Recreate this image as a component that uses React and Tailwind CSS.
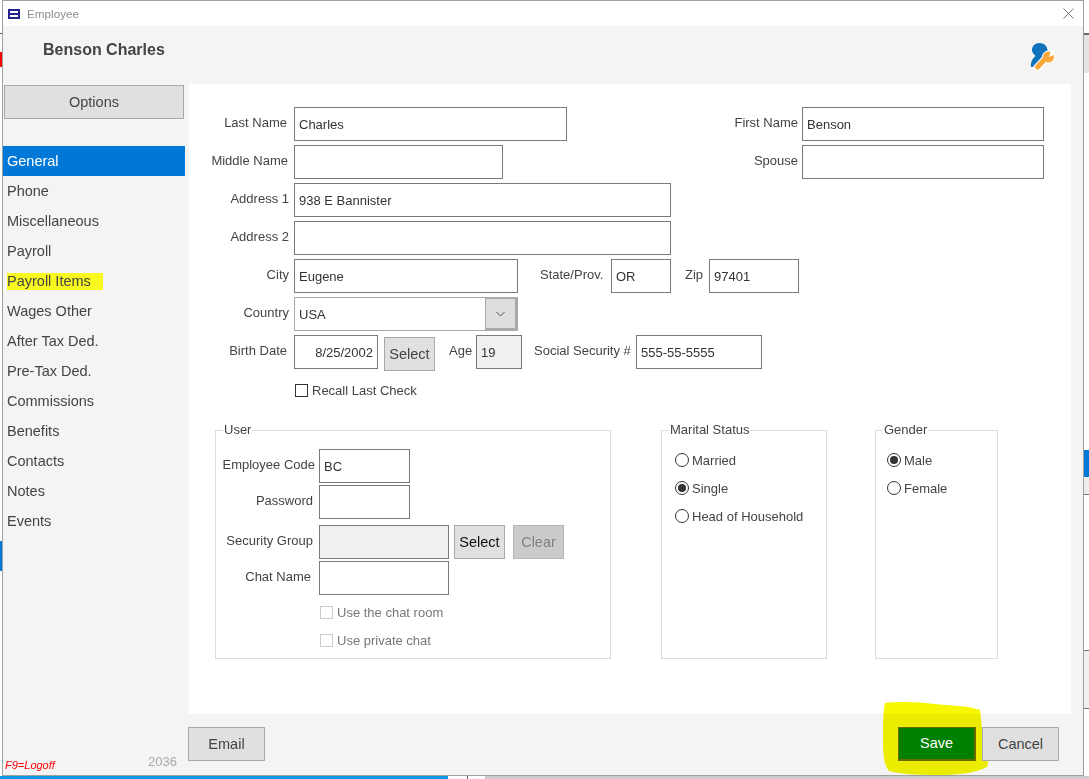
const navItems = ["General","Phone","Miscellaneous","Payroll","Payroll Items","Wages Other","After Tax Ded.","Pre-Tax Ded.","Commissions","Benefits","Contacts","Notes","Events"];

function Label({ className = "", children }) {
  return <label className={"shrink-0 pt-[7px] text-[13px] leading-[18px] text-[#444] whitespace-nowrap " + className}>{children}</label>;
}

function Field({ value = "", bg = "bg-white", className = "" }) {
  return <input readOnly value={value} className={"h-[34px] shrink-0 border border-[#7a7a7a] px-[4px] text-[13px] text-[#333] outline-none " + bg + " " + className} />;
}

function Btn({ look = "border border-[#a9a9a9] bg-[#e0e0e0] text-[#444]", className = "", children }) {
  return <button className={"flex h-[34px] shrink-0 items-center justify-center pt-[1px] text-[14.5px] " + look + " " + className}>{children}</button>;
}

function Radio({ checked, label }) {
  return (
    <div className="flex h-[28px] items-center gap-[3px] text-[13px] text-[#444]">
      <span className="flex h-[14px] w-[14px] items-center justify-center rounded-full border border-[#333] bg-white">
        {checked && <span className="h-[8px] w-[8px] rounded-full bg-[#333]" />}
      </span>
      <span className="pt-[1px]">{label}</span>
    </div>
  );
}

function Check({ label, disabled, className = "" }) {
  return (
    <div className={"flex items-center gap-[4px] text-[13px] " + (disabled ? "text-[#777] " : "text-[#444] ") + className}>
      <span className={"h-[13px] w-[13px] border bg-white " + (disabled ? "border-[#ccc]" : "border-[#333]")} />
      <span className="pt-[1px]">{label}</span>
    </div>
  );
}

function UserIcon() {
  return (
    <svg width="26" height="28" viewBox="0 0 26 28" className="block">
      <path d="M10.500 1c4.500 0 8 3 8 7.500 0 3.500-2 6-4 7.500l-2 8-10.500 1c-.5-3 .3-6 2-8.500 1-1.300 2-2 2.500-2.500C4.500 12 3 10.500 3 8 3 4 6 1 10.500 1z" fill="#1273bd" />
      <path d="M8.500 25.500l9-9.500" stroke="#fff" strokeWidth="8" strokeLinecap="round" />
      <circle cx="19.500" cy="15" r="6.500" fill="#fff" />
      <path d="M8.500 25l8.500-9" stroke="#f9a63a" strokeWidth="5" strokeLinecap="round" />
      <circle cx="19.500" cy="15" r="5.500" fill="#f9a63a" />
      <path d="M19.800 15L22.300 8.500H26V12.500z" fill="#fff" />
    </svg>
  );
}

export default function App() {
  return (
    <div className="relative h-[779px] w-[1089px] overflow-hidden bg-white font-['Liberation_Sans',Arial,sans-serif]">
      {/* application behind the dialog */}
      <div className="absolute left-0 top-[52px] h-[15px] w-[3px] bg-[#f00]" />
      <div className="absolute left-0 top-[541px] h-[30px] w-[3px] bg-[#0078d7]" />
      <div className="absolute left-0 top-[33px] h-[1px] w-[3px] bg-[#555]" />
      <div className="absolute bottom-0 left-0 h-[3px] w-[448px] bg-[#0a96e0]" />
      <div className="absolute bottom-0 left-[467px] h-[3px] w-[1px] bg-[#666]" />
      <div className="absolute bottom-0 left-[485px] h-[3px] w-[604px] bg-[#ccc]" />
      <div className="absolute right-0 top-[33px] h-[40px] w-[5px] border-t-2 border-[#666] bg-[#e4e4e4]" />
      <div className="absolute right-0 top-[450px] h-[27px] w-[5px] bg-[#0078d7]" />
      <div className="absolute right-0 top-[478px] h-[17px] w-[5px] border-b border-[#777] bg-[#eee]" />
      <div className="absolute right-0 top-[650px] h-[59px] w-[5px] border-y border-[#777] bg-[#f0f0f0]" />

      {/* dialog */}
      <div className="relative ml-[2px] flex h-[776px] w-[1082px] flex-col border-x border-y border-[#a0a0a0] bg-[#f4f4f4]">
        <div className="flex h-[25px] shrink-0 items-center bg-white pl-[5px] pr-[9px]">
          <svg width="12" height="10" viewBox="0 0 12 10" className="mr-[7px]">
            <rect width="12" height="10" fill="#23238e" />
            <rect x="2" y="2" width="8" height="2" fill="#fff" />
            <rect x="2" y="6" width="8" height="2" fill="#fff" />
          </svg>
          <span className="text-[11.7px] text-[#8c8c8c]">Employee</span>
          <svg width="11" height="11" viewBox="0 0 11 11" className="ml-auto">
            <path d="M.5.500l10 10M10.500.500l-10 10" stroke="#777" strokeWidth="1" />
          </svg>
        </div>

        <div className="flex h-[58px] shrink-0 items-start justify-between pl-[40px] pr-[28px]">
          <h1 className="pt-[14px] text-[16px] font-bold leading-[19px] text-[#444]">Benson Charles</h1>
          <div className="pt-[16px]"><UserIcon /></div>
        </div>

        <div className="flex min-h-0 flex-1">
          <aside className="flex w-[186px] shrink-0 flex-col">
            <Btn className="ml-[1px] mt-[1px] w-[180px]">Options</Btn>
            <nav className="mt-[27px] w-[182px] text-[14.5px] text-[#444]">
              {navItems.map((item, i) => (
                <div key={item} className={"flex h-[30px] items-center pl-[4px] pt-[1px] " + (i === 0 ? "bg-[#0078d7] text-white" : "")}>
                  <span className={item === "Payroll Items" ? "bg-[#f9f920] pr-[12px] leading-[17px]" : ""}>{item}</span>
                </div>
              ))}
            </nav>
            <div className="mt-auto flex items-end justify-between pb-[3px] pl-[2px] pr-[12px]">
              <span className="text-[11px] italic leading-[13px] text-[#f00]">F9=Logoff</span>
              <span className="mb-[1px] text-[13px] leading-[18px] text-[#aaa]">2036</span>
            </div>
          </aside>

          <div className="mr-[12px] flex min-w-0 flex-1 flex-col">
            <main className="h-[630px] shrink-0 bg-white pr-[27px] pt-[23px]">
              <div className="flex flex-col gap-[4px]">
                <div className="flex">
                  <Label className="w-[98px] text-right">Last Name</Label>
                  <Field value="Charles" className="ml-[7px] w-[273px]" />
                  <Label className="ml-auto mr-[4px]">First Name</Label>
                  <Field value="Benson" className="w-[242px]" />
                </div>
                <div className="flex">
                  <Label className="w-[99px] text-right">Middle Name</Label>
                  <Field className="ml-[6px] w-[209px]" />
                  <Label className="ml-auto mr-[4px]">Spouse</Label>
                  <Field className="w-[242px]" />
                </div>
                <div className="flex">
                  <Label className="w-[100px] text-right">Address 1</Label>
                  <Field value="938 E Bannister" className="ml-[5px] w-[377px]" />
                </div>
                <div className="flex">
                  <Label className="w-[100px] text-right">Address 2</Label>
                  <Field className="ml-[5px] w-[377px]" />
                </div>
                <div className="flex">
                  <Label className="w-[100px] text-right">City</Label>
                  <Field value="Eugene" className="ml-[5px] w-[224px]" />
                  <Label className="ml-[22px] w-[63px]">State/Prov.</Label>
                  <Field value="OR" className="ml-[8px] w-[60px]" />
                  <Label className="ml-[14px] w-[18px]">Zip</Label>
                  <Field value="97401" className="ml-[6px] w-[90px]" />
                </div>
                <div className="flex">
                  <Label className="w-[100px] text-right">Country</Label>
                  <div className="ml-[5px] flex h-[34px] w-[224px] items-stretch border border-[#a9a9a9] bg-white">
                    <span className="flex-1 pl-[4px] pt-[8px] text-[13px] leading-[18px] text-[#333]">USA</span>
                    <span className="flex w-[32px] items-center justify-center border-2 border-l border-t border-[#a9a9a9] bg-[#dedede]">
                      <svg width="9" height="6" viewBox="0 0 9 6"><path d="M.5 1l4 4 4-4" fill="none" stroke="#555" strokeWidth="1" /></svg>
                    </span>
                  </div>
                </div>
                <div className="flex">
                  <Label className="w-[98px] text-right">Birth Date</Label>
                  <Field value="8/25/2002" className="ml-[7px] w-[84px] text-right" />
                  <Btn className="ml-[6px] mt-[2px] w-[51px]">Select</Btn>
                  <Label className="ml-[14px] w-[24px]">Age</Label>
                  <Field value="19" bg="bg-[#f0f0f0]" className="ml-[3px] w-[46px]" />
                  <Label className="ml-[12px] w-[99px]">Social Security #</Label>
                  <Field value="555-55-5555" className="ml-[3px] w-[126px]" />
                </div>
              </div>

              <Check label="Recall Last Check" className="ml-[106px] mt-[11px] h-[16px]" />

              <div className="ml-[26px] mt-[24px] flex items-start text-[13px] text-[#444]">
                <fieldset className="h-[237px] w-[396px] border border-[#ddd]">
                  <legend className="ml-[7px] px-[1px] leading-[16px]">User</legend>
                  <div className="flex flex-col gap-[2px] pt-[11px]">
                    <div className="flex">
                      <Label className="w-[99px] text-right">Employee Code</Label>
                      <Field value="BC" className="ml-[4px] w-[91px]" />
                    </div>
                    <div className="flex">
                      <Label className="w-[97px] text-right">Password</Label>
                      <Field className="ml-[6px] w-[91px]" />
                    </div>
                    <div className="mt-[4px] flex">
                      <Label className="w-[97px] text-right">Security Group</Label>
                      <Field bg="bg-[#f0f0f0]" className="ml-[6px] w-[130px]" />
                      <Btn look="border border-[#a9a9a9] bg-[#e0e0e0] text-[#111]" className="ml-[5px] w-[51px]">Select</Btn>
                      <Btn look="border border-[#b5b5b5] bg-[#cbcbcb] text-[#808080]" className="ml-[8px] w-[51px]">Clear</Btn>
                    </div>
                    <div className="flex">
                      <Label className="w-[95px] text-right">Chat Name</Label>
                      <Field className="ml-[8px] w-[130px]" />
                    </div>
                  </div>
                  <Check disabled label="Use the chat room" className="ml-[104px] mt-[9px] h-[16px]" />
                  <Check disabled label="Use private chat" className="ml-[104px] mt-[12px] h-[16px]" />
                </fieldset>

                <fieldset className="ml-[50px] h-[237px] w-[166px] border border-[#ddd] pl-[13px]">
                  <legend className="-ml-[6px] px-[1px] leading-[16px]">Marital Status</legend>
                  <div className="pt-[8px]">
                    <Radio label="Married" />
                    <Radio checked label="Single" />
                    <Radio label="Head of Household" />
                  </div>
                </fieldset>

                <fieldset className="ml-[48px] h-[237px] w-[123px] border border-[#ddd] pl-[11px]">
                  <legend className="-ml-[4px] px-[1px] leading-[16px]">Gender</legend>
                  <div className="pt-[8px]">
                    <Radio checked label="Male" />
                    <Radio label="Female" />
                  </div>
                </fieldset>
              </div>
            </main>

            <footer className="flex flex-1 items-start pr-[12px] pt-[13px]">
              <Btn className="-ml-[1px] w-[77px]">Email</Btn>
              {/* highlighter stroke, under the buttons it was drawn around */}
              <svg width="1089" height="779" viewBox="0 0 1089 779" className="pointer-events-none absolute left-[-3px] top-[-1px] mix-blend-multiply">
                <path d="M885 703C900 701 920 702 935 704C955 706 970 706 980 710C982 725 982 735 985 745C988 755 989 762 987 767C975 773 960 775 940 775C915 775 900 774 889 771C884 765 883 755 883 740C883 725 883 712 885 703z" fill="#f7f700" />
              </svg>
              <Btn look="border-t border-l border-[#6b6b00] border-b-2 border-r-2 bg-[#008000] text-white" className="relative z-10 ml-auto w-[78px]">Save</Btn>
              <Btn className="relative z-10 ml-[6px] w-[77px]">Cancel</Btn>
            </footer>
          </div>
        </div>
      </div>
    </div>
  );
}
